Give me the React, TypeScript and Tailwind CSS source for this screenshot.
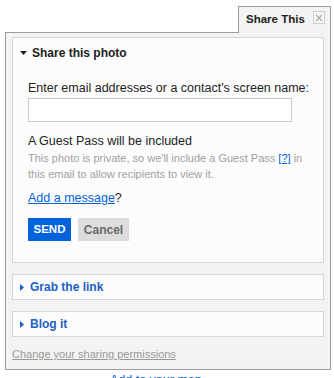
import React from "react";

const TriangleDown = () => (
    <svg width="7" height="4" viewBox="0 0 7 4" className="shrink-0">
        <path d="M0 0 L7 0 L3.5 4 Z" fill="#222" />
    </svg>
);

const TriangleRight = () => (
    <svg width="4" height="7" viewBox="0 0 4 7" className="shrink-0">
        <path d="M0 0 L4 3.5 L0 7 Z" fill="#1f5fc6" />
    </svg>
);

const CollapsedSection = ({ title }: { title: string }) => (
    <div className="h-[26px] border border-[#d6d6d6] bg-[#fcfcfc] flex items-center pl-[7px] gap-[6px]">
        <TriangleRight />
        <span className="text-[12px] leading-[16px] font-bold text-[#1f5fc6]">{title}</span>
    </div>
);

const App = () => {
    return (
        <div className="w-[334px] h-[378px] overflow-hidden bg-white font-['Liberation_Sans',Arial,sans-serif] text-[#222]">
            <div className="pt-[6px] pl-[5px] w-[331px]">
                {/* tab */}
                <div className="flex justify-end">
                    <div className="relative z-10 -mb-px w-[93px] h-[27px] border border-b-0 border-[#9c9c9c] bg-[#f3f3f3] flex items-start pt-[5px] pl-[7px]">
                        <span className="text-[11.5px] leading-[14px] font-bold text-[#222]">Share This</span>
                        <span className="ml-[8px] -mt-[1px] w-[12px] h-[13px] border border-[#cfcfcf] bg-[#f7f7f7] flex items-center justify-center">
                            <svg width="8" height="8" viewBox="0 0 8 8">
                                <path d="M1 1 L7 7 M7 1 L1 7" stroke="#b0b0b0" strokeWidth="1.4" />
                            </svg>
                        </span>
                    </div>
                </div>

                {/* panel */}
                <div className="border border-[#9c9c9c] bg-[#f3f3f3] px-[6px] pt-[4px] pb-[8px]">
                    <div className="border border-[#d6d6d6] bg-[#fcfcfc] pt-[7px] pb-[21px]">
                        <div className="flex items-center gap-[5px] pl-[7px] text-[12px] leading-[16px] font-bold">
                            <TriangleDown />
                            <span>Share this photo</span>
                        </div>

                        <div className="pl-[15px] pr-[4px]">
                            <p className="mt-[19px] text-[12.5px] leading-[16px] whitespace-nowrap">
                                Enter email addresses or a contact's screen name:
                            </p>
                            <input
                                type="text"
                                className="mt-[2px] block w-[264px] h-[24px] border border-[#c9c9c9] bg-white outline-none"
                            />
                            <p className="mt-[12px] text-[12.5px] leading-[14px]">A Guest Pass will be included</p>
                            <p className="mt-[2px] text-[11px] leading-[16px] text-[#a0a0a0] whitespace-nowrap">
                                This photo is private, so we'll include a Guest Pass{" "}
                                <span className="text-[#0063dc] underline">[?]</span> in
                                <br />
                                this email to allow recipients to view it.
                            </p>
                            <p className="mt-[8px] text-[12.5px] leading-[16px]">
                                <span className="text-[#0063dc] underline">Add a message</span>?
                            </p>
                            <div className="mt-[12px] flex gap-[7px]">
                                <button className="w-[43px] h-[23px] bg-[#0063dc] text-white text-[11.5px] font-bold">
                                    SEND
                                </button>
                                <button className="w-[51px] h-[23px] bg-[#dcdcdc] text-[#6a6a6a] text-[12px] font-bold">
                                    Cancel
                                </button>
                            </div>
                        </div>
                    </div>

                    <div className="mt-[11px] flex flex-col gap-[11px]">
                        <CollapsedSection title="Grab the link" />
                        <CollapsedSection title="Blog it" />
                    </div>

                    <p className="mt-[10px] text-[11px] leading-[14px] text-[#999] underline">
                        Change your sharing permissions
                    </p>
                </div>

                <div className="flex items-center pl-[89px] mt-[2px] text-[12.5px] leading-[16px] text-[#0063dc]">
                    <span className="w-[5px] h-[5px] rounded-full border border-[#777] mr-[11px]" />
                    <span>Add to your map</span>
                </div>
            </div>
        </div>
    );
};

export default App;
